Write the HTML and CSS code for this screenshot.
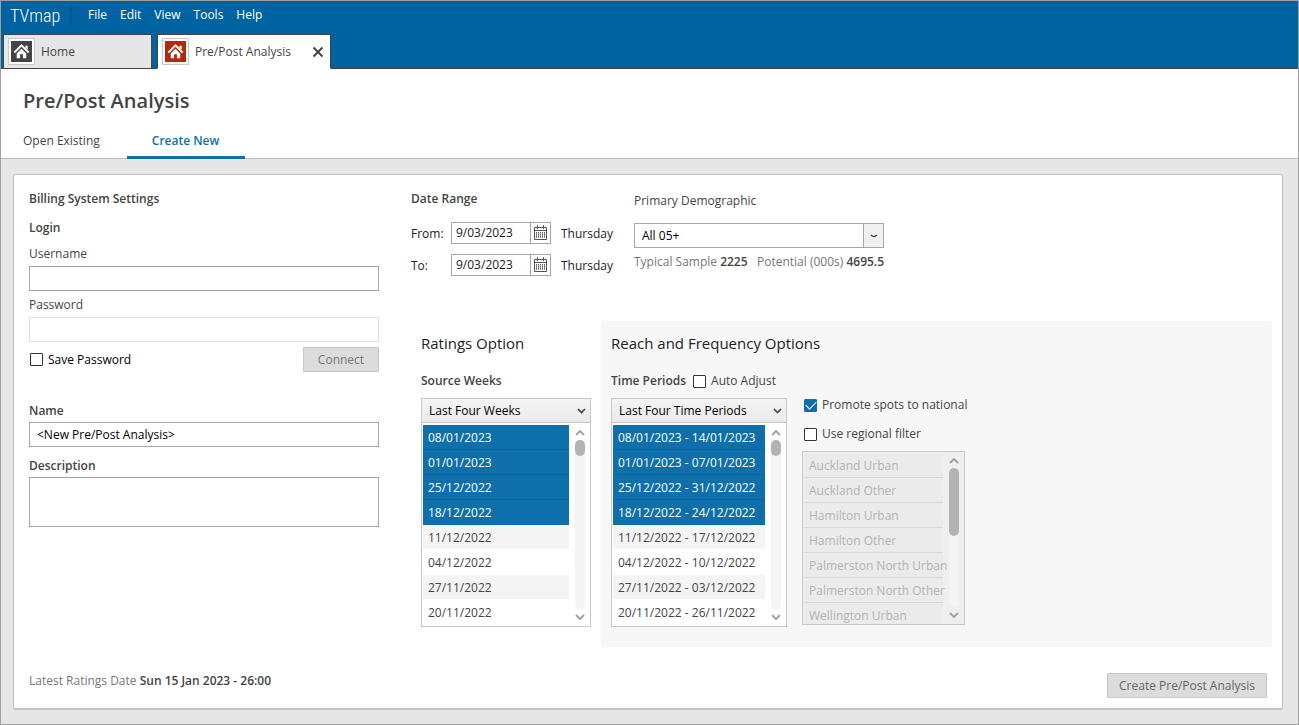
FILE: index.html
```html
<!DOCTYPE html>
<html lang="en">
<head>
  <meta charset="UTF-8">
  <meta name="viewport" content="width=device-width, initial-scale=1.0">
  <title>TVmap - Pre/Post Analysis</title>
  <link rel="stylesheet" href="styles.css">
</head>
<body>
  <svg class="symbols" aria-hidden="true">
    <symbol id="house" viewBox="0 0 22 22">
      <path d="M3.5 12 L11 4.5 L18.5 12" fill="none" stroke="#fff" stroke-width="2"/>
      <path d="M15 5h2.5v4L15 7z M6 13.200l5-5 5 5V18h-3.500v-4h-3v4H6z" fill="#fff"/>
    </symbol>
    <symbol id="calendar" viewBox="0 0 15 16">
      <path d="M1.500 2.500h12v12h-12z M1.500 5.500h12" fill="none" stroke="#555"/>
      <path d="M4.500 0v4 M10.500 0v4" stroke="#555"/>
      <path d="M3 7.500h9 M3 9.500h9 M3 11.500h9" stroke="#555" stroke-dasharray="1 1"/>
      <path d="M3 8.500h9 M3 10.500h9 M3 12.500h9" stroke="#999" stroke-dasharray="1 1"/>
    </symbol>
    <symbol id="up" viewBox="0 0 10 6">
      <path d="M1 5l4-4 4 4" fill="none" stroke="#a3a3a3" stroke-width="2"/>
    </symbol>
    <symbol id="down" viewBox="0 0 10 6">
      <path d="M1 1l4 4 4-4" fill="none" stroke="#a3a3a3" stroke-width="2"/>
    </symbol>
    <symbol id="chevron" viewBox="0 0 9 6">
      <path d="M1 1l3.500 3.500 3.500-3.500" fill="none" stroke="#444" stroke-width="1.700"/>
    </symbol>
  </svg>

  <header class="header">
    <div class="menubar">
      <span class="logo">TVmap</span>
      <nav class="menu">
        <a href="#">File</a>
        <a href="#">Edit</a>
        <a href="#">View</a>
        <a href="#">Tools</a>
        <a href="#">Help</a>
      </nav>
    </div>
    <div class="doc-tabs">
      <a class="doc-tab" href="#">
        <span class="tab-icon"><svg><use href="#house"/></svg></span>
        Home
      </a>
      <div class="doc-tab active">
        <span class="tab-icon red"><svg><use href="#house"/></svg></span>
        <span class="tab-name">Pre/Post Analysis</span>
        <button class="close" aria-label="Close">
          <svg width="12" height="12" viewBox="0 0 12 12"><path d="M1.500 1.500l9 9M10.500 1.500l-9 9" stroke="#444" stroke-width="2"/></svg>
        </button>
      </div>
    </div>
  </header>

  <div class="page-head">
    <h1>Pre/Post Analysis</h1>
    <nav class="page-tabs">
      <a href="#">Open Existing</a>
      <a class="active" href="#">Create New</a>
    </nav>
  </div>

  <main class="main">
    <div class="panel">
      <div class="columns">
        <section class="settings">
          <h2>Billing System Settings</h2>
          <h3>Login</h3>
          <label for="username">Username</label>
          <input class="field" type="text" id="username">
          <label for="password">Password</label>
          <input class="field" type="password" id="password" disabled>
          <div class="save-row">
            <label class="check black"><input type="checkbox"> Save Password</label>
            <button class="btn connect" disabled>Connect</button>
          </div>
          <label class="strong" for="name">Name</label>
          <input class="field" type="text" id="name" value="&lt;New Pre/Post Analysis&gt;">
          <label class="strong description" for="description">Description</label>
          <textarea class="field" id="description"></textarea>
        </section>

        <div class="right">
          <div class="top">
            <section class="dates">
              <h2>Date Range</h2>
              <div class="date-row">
                <label for="from">From:</label>
                <div class="date">
                  <input type="text" id="from" value="9/03/2023">
                  <button aria-label="Choose from date"><svg width="15" height="16"><use href="#calendar"/></svg></button>
                </div>
                <span>Thursday</span>
              </div>
              <div class="date-row">
                <label for="to">To:</label>
                <div class="date">
                  <input type="text" id="to" value="9/03/2023">
                  <button aria-label="Choose to date"><svg width="15" height="16"><use href="#calendar"/></svg></button>
                </div>
                <span>Thursday</span>
              </div>
            </section>
            <section class="demographic">
              <label for="demo">Primary Demographic</label>
              <div class="select demo">
                <select id="demo"><option>All 05+</option></select>
                <span class="arrow"><svg width="8" height="4" viewBox="0 0 8 4"><path d="M1 1q3 3 6 0" fill="none" stroke="#444" stroke-width="1.500"/></svg></span>
              </div>
              <p class="sample">
                <span>Typical Sample <b>2225</b></span>
                <span>Potential (000s) <b>4695.5</b></span>
              </p>
            </section>
          </div>

          <div class="options">
            <section class="ratings">
              <h4>Ratings Option</h4>
              <div class="list-title"><label class="strong" for="weeks">Source Weeks</label></div>
              <div class="list-box">
                <div class="select">
                  <select id="weeks"><option>Last Four Weeks</option></select>
                  <span class="arrow"><svg width="9" height="6"><use href="#chevron"/></svg></span>
                </div>
                <div class="list">
                  <ul>
                    <li class="selected">08/01/2023</li>
                    <li class="selected">01/01/2023</li>
                    <li class="selected">25/12/2022</li>
                    <li class="selected">18/12/2022</li>
                    <li>11/12/2022</li>
                    <li>04/12/2022</li>
                    <li>27/11/2022</li>
                    <li>20/11/2022</li>
                  </ul>
                  <div class="scrollbar">
                    <svg width="10" height="6"><use href="#up"/></svg>
                    <div class="track"><div class="thumb"></div></div>
                    <svg width="10" height="6"><use href="#down"/></svg>
                  </div>
                </div>
              </div>
            </section>

            <section class="reach">
              <h4>Reach and Frequency Options</h4>
              <div class="list-title">
                <label class="strong" for="periods">Time Periods</label>
                <label class="check"><input type="checkbox"> Auto Adjust</label>
              </div>
              <div class="reach-body">
                <div class="list-box">
                  <div class="select">
                    <select id="periods"><option>Last Four Time Periods</option></select>
                    <span class="arrow"><svg width="9" height="6"><use href="#chevron"/></svg></span>
                  </div>
                  <div class="list">
                    <ul>
                      <li class="selected">08/01/2023 - 14/01/2023</li>
                      <li class="selected">01/01/2023 - 07/01/2023</li>
                      <li class="selected">25/12/2022 - 31/12/2022</li>
                      <li class="selected">18/12/2022 - 24/12/2022</li>
                      <li>11/12/2022 - 17/12/2022</li>
                      <li>04/12/2022 - 10/12/2022</li>
                      <li>27/11/2022 - 03/12/2022</li>
                      <li>20/11/2022 - 26/11/2022</li>
                    </ul>
                    <div class="scrollbar">
                      <svg width="10" height="6"><use href="#up"/></svg>
                      <div class="track"><div class="thumb"></div></div>
                      <svg width="10" height="6"><use href="#down"/></svg>
                    </div>
                  </div>
                </div>
                <div class="filters">
                  <label class="check"><input type="checkbox" checked> Promote spots to national</label>
                  <label class="check"><input type="checkbox"> Use regional filter</label>
                  <div class="list regions">
                    <ul>
                      <li>Auckland Urban</li>
                      <li>Auckland Other</li>
                      <li>Hamilton Urban</li>
                      <li>Hamilton Other</li>
                      <li>Palmerston North Urban</li>
                      <li>Palmerston North Other</li>
                      <li>Wellington Urban</li>
                    </ul>
                    <div class="scrollbar">
                      <svg width="10" height="6"><use href="#up"/></svg>
                      <div class="track"><div class="thumb"></div></div>
                      <svg width="10" height="6"><use href="#down"/></svg>
                    </div>
                  </div>
                </div>
              </div>
            </section>
          </div>
        </div>
      </div>

      <footer class="footer">
        <span>Latest Ratings Date <b>Sun 15 Jan 2023 - 26:00</b></span>
        <button class="btn create" disabled>Create Pre/Post Analysis</button>
      </footer>
    </div>
  </main>
</body>
</html>
```
FILE: styles.css
```css
* {
  box-sizing: border-box;
  margin: 0;
  padding: 0;
}
body {
  display: flex;
  flex-direction: column;
  min-height: 100vh;
  border: 1px solid #a0a0a0;
  background: #e6e6e6;
  color: #444;
  font: 12px/16px "Open Sans", "Noto Sans", sans-serif;
}
input, select, textarea, button {
  font: inherit;
  color: inherit;
}
a {
  color: inherit;
  text-decoration: none;
}
ul {
  list-style: none;
}
svg {
  display: block;
}
b {
  color: #444;
  font-weight: 600;
}
.symbols {
  display: none;
}

/* header */
.header {
  background: #0063a1;
}
.menubar {
  display: flex;
  align-items: center;
  height: 28px;
  margin-bottom: 5px;
  color: #fff;
}
.logo {
  width: 71px;
  padding: 2px 0 0 9px;
  border-right: 2px solid #00528a;
  font: 300 18px/20px "Roboto Condensed", "Open Sans Condensed", "Noto Sans CJK SC", sans-serif;
}
.menu {
  display: flex;
  gap: 13px;
  padding-left: 16px;
}
.doc-tabs {
  display: flex;
  gap: 5px;
  height: 35px;
  padding-left: 2px;
  box-shadow: inset 0 -1px #444;
}
.doc-tab {
  display: flex;
  align-items: center;
  gap: 6px;
  width: 149px;
  padding-left: 4px;
  border: 1px solid #444;
  background: #e6e6e6;
}
.doc-tab.active {
  width: 174px;
  border-bottom-color: #fff;
  background: #fff;
}
.tab-icon {
  width: 27px;
  height: 27px;
  padding: 2px;
  border: 1px solid #c8c8c8;
  background: #fff;
}
.tab-icon svg {
  width: 21px;
  height: 21px;
  background: #444;
}
.tab-icon.red svg {
  background: #b02a0c;
}
.tab-name {
  flex: 1;
}
.close {
  padding: 6px;
  border: 0;
  background: none;
}

/* title and page tabs */
.page-head {
  padding-top: 17px;
  border-bottom: 1px solid #bbb;
  background: #fff;
}
h1 {
  padding-left: 22px;
  font-size: 20px;
  font-weight: 600;
  line-height: 30px;
}
.page-tabs {
  display: flex;
  margin: 7px 0 -1px 0;
}
.page-tabs a {
  padding: 10px 27px 7px 22px;
  border-bottom: 3px solid transparent;
}
.page-tabs .active {
  padding: 10px 26px 7px 25px;
  border-color: #0f6fab;
  color: #0f6fab;
  font-weight: 600;
}

/* panel */
.main {
  display: flex;
  flex: 1;
  padding: 15px 15px 14px 12px;
}
.panel {
  display: flex;
  flex: 1;
  flex-direction: column;
  justify-content: space-between;
  padding: 16px 10px 10px 15px;
  border: 1px solid #c3c3c3;
  border-bottom-width: 2px;
  border-radius: 3px;
  background: #fff;
}
.columns {
  display: grid;
  grid-template-columns: 350px 1fr;
  gap: 32px;
}
h2, h3, .strong {
  font-size: 12px;
  font-weight: 600;
}
.settings {
  display: flex;
  flex-direction: column;
}
h3 {
  margin: 13px 0 10px;
}
.field {
  height: 25px;
  margin: 4px 0 6px;
  padding: 0 7px;
  border: 1px solid #a6a6a6;
  background: #fff;
  color: #000;
}
.field:disabled {
  margin-bottom: 5px;
  border-color: #dfdfe6;
}
.strong + .field {
  margin-top: 3px;
}
textarea.field {
  height: 50px;
  resize: none;
}
.save-row {
  display: flex;
  align-items: center;
  justify-content: space-between;
  margin-bottom: 31px;
}
.description {
  margin-top: 5px;
}
.check {
  display: flex;
  align-items: center;
  gap: 5px;
  white-space: nowrap;
}
.check input {
  display: grid;
  flex: none;
  place-content: center;
  width: 13px;
  height: 13px;
  border: 1px solid #333;
  border-radius: 1px;
  background: #fff;
  appearance: none;
}
.check input:checked {
  border-color: #0f6fab;
  background: #0f6fab;
}
.check input:checked::before {
  width: 9px;
  height: 5px;
  margin-bottom: 3px;
  border: solid #fff;
  border-width: 0 0 1px 1px;
  content: "";
  transform: rotate(-45deg);
}
.black {
  padding-left: 1px;
  color: #000;
}
.btn {
  height: 25px;
  border: 1px solid #c6c6c6;
  border-radius: 1px;
  background: #dcdcdc;
  color: #777;
}
.connect {
  width: 76px;
}
.create {
  width: 160px;
  color: #666;
}

/* dates and demographic */
.top {
  display: flex;
  gap: 25px;
  min-height: 130px;
}
.dates h2 {
  margin-bottom: 15px;
}
.date-row {
  display: grid;
  grid-template-columns: 40px 100px 58px;
  align-items: center;
  margin-bottom: 10px;
  color: #222;
}
.date-row label, .date-row span {
  padding-top: 2px;
}
.date-row span {
  padding-left: 10px;
}
.date {
  display: flex;
  height: 22px;
  border: 1px solid #a6a6a6;
}
.date input {
  flex: 1;
  min-width: 0;
  padding: 0 4px;
  border: 0;
}
.date button {
  display: grid;
  place-content: center;
  width: 20px;
  border: 0;
  border-left: 1px solid #a6a6a6;
  background: #fff;
}
.demographic {
  width: 250px;
  padding-top: 2px;
}
.select {
  display: grid;
}
.select select, .arrow {
  grid-area: 1 / 1;
}
.select select {
  width: 100%;
  height: 25px;
  padding: 0 7px;
  border: 1px solid #c8c8c8;
  border-radius: 0;
  background: linear-gradient(#f4f4f4, #eaeaea);
  color: #000;
  appearance: none;
}
.arrow {
  display: grid;
  place-content: center;
  justify-self: end;
  width: 20px;
  pointer-events: none;
}
.demo {
  margin: 14px 0 6px;
}
.demo select {
  border-color: #a6a6a6;
  background: #fff;
}
.demo .arrow {
  width: 21px;
  border: 1px solid #a6a6a6;
  background: #f0f0f0;
}
.sample {
  display: flex;
  justify-content: space-between;
}
.sample, .footer {
  color: #777;
}

/* ratings and reach */
.options {
  display: flex;
}
.ratings {
  width: 190px;
  padding: 10px;
}
.reach {
  flex: 1;
  padding: 10px 10px 20px;
  border-radius: 3px;
  background: #f7f7f7;
}
h4 {
  margin-bottom: 18px;
  color: #222;
  font-size: 15px;
  font-weight: 400;
  line-height: 24px;
}
.list-title {
  display: flex;
  gap: 7px;
  margin-bottom: 9px;
}
.reach-body {
  display: grid;
  grid-template-columns: 176px 163px;
  gap: 15px;
}
.list {
  display: flex;
  padding: 2px 1px 1px;
  border: 1px solid #c8c8c8;
  border-top: 0;
  background: #fff;
}
.list ul {
  flex: 1;
  min-width: 0;
}
.list li {
  height: 25px;
  padding: 5px 5px 3px;
  white-space: nowrap;
}
.list li:nth-child(odd) {
  border-bottom: 1px solid #fff;
  background: #f4f4f4;
}
.list .selected, .list .selected:nth-child(odd) {
  border-bottom: 1px solid #0a66a0;
  background: #0f6fab;
  color: #fff;
}
.scrollbar {
  display: flex;
  flex-direction: column;
  gap: 4px;
  width: 20px;
  padding: 5px 4px 5px 6px;
}
.track {
  flex: 1;
  width: 10px;
  border-radius: 5px;
  background: #f4f4f4;
}
.thumb {
  height: 16px;
  border-radius: 5px;
  background: #b3b3b3;
}
.filters {
  margin-top: -1px;
}
.filters .check {
  margin: 0 0 13px 2px;
}
.filters .regions {
  height: 174px;
  margin-top: -4px;
  padding: 1px;
  border-top: 1px solid #c8c8c8;
  background: #efefef;
  color: #b3b3b3;
  overflow: hidden;
}
.regions li, .regions li:nth-child(odd) {
  border-bottom: 1px solid #d8d8d8;
  background: #ebebeb;
}
.regions .thumb {
  height: 68px;
}

.footer {
  display: flex;
  align-items: flex-start;
  justify-content: space-between;
  padding-right: 5px;
}
```
